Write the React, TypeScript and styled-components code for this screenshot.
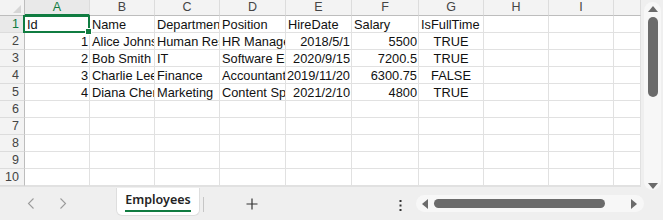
import React from 'react'
import styled, { createGlobalStyle, css } from 'styled-components'

const GlobalStyle = createGlobalStyle`
  html, body {
    margin: 0;
    padding: 0;
    background: #ffffff;
  }
  body {
    font-family: "Liberation Sans", Arial, sans-serif;
    overflow: hidden;
  }
`

const GREEN = '#107c41'
const GRID = '#e1e1e1'
const HEAD_LINE = '#bdbdbd'

const COL_WIDTHS = [65, 65, 65, 66, 66, 67, 65, 65, 65, 27]
const LETTERS = ['A', 'B', 'C', 'D', 'E', 'F', 'G', 'H', 'I', '']

type Align = 'left' | 'right' | 'center'
type CellValue = { text: string; align: Align }

const t = (text: string): CellValue => ({ text, align: 'left' })
const n = (text: string): CellValue => ({ text, align: 'right' })
const b = (text: string): CellValue => ({ text, align: 'center' })

const ROWS: CellValue[][] = [
  [t('Id'), t('Name'), t('Department'), t('Position'), t('HireDate'), t('Salary'), t('IsFullTime')],
  [n('1'), t('Alice Johnson'), t('Human Resources'), t('HR Manager'), n('2018/5/1'), n('5500'), b('TRUE')],
  [n('2'), t('Bob Smith'), t('IT'), t('Software Engineer'), n('2020/9/15'), n('7200.5'), b('TRUE')],
  [n('3'), t('Charlie Lee'), t('Finance'), t('Accountant'), n('2019/11/20'), n('6300.75'), b('FALSE')],
  [n('4'), t('Diana Chen'), t('Marketing'), t('Content Specialist'), n('2021/2/10'), n('4800'), b('TRUE')],
]

const Page = styled.div`
  width: 663px;
  height: 220px;
  display: flex;
  flex-direction: column;
  background: #efefef;
`

const Top = styled.div`
  display: flex;
  height: 187px;
`

const Sheet = styled.div<{ $cols: string }>`
  display: grid;
  grid-template-columns: ${p => p.$cols};
  grid-template-rows: 16px repeat(10, 17px);
  width: 641px;
  height: 187px;
  background: #ffffff;
  border-bottom: 1px solid ${GRID};
  box-sizing: border-box;
  overflow: hidden;
`

const Corner = styled.div`
  position: relative;
  background: #f3f3f3;
  border-right: 1px solid ${HEAD_LINE};
  border-bottom: 1px solid ${HEAD_LINE};
  &::after {
    content: '';
    position: absolute;
    right: 3px;
    bottom: 2px;
    width: 0;
    height: 0;
    border-left: 8px solid transparent;
    border-bottom: 8px solid #d6d6d6;
  }
`

const ColHead = styled.div<{ $active?: boolean }>`
  background: #f3f3f3;
  border-right: 1px solid #dcdcdc;
  border-bottom: 1px solid ${HEAD_LINE};
  font-size: 12.5px;
  line-height: 15px;
  text-align: center;
  color: #444444;
  ${p =>
    p.$active &&
    css`
      background: #e9e9e9;
      color: ${GREEN};
      border-bottom: 2px solid ${GREEN};
    `}
`

const RowHead = styled.div<{ $active?: boolean }>`
  background: #f3f3f3;
  border-right: 1px solid ${HEAD_LINE};
  border-bottom: 1px solid #dcdcdc;
  font-size: 12.5px;
  line-height: 17px;
  text-align: right;
  padding-right: 5px;
  color: #444444;
  ${p =>
    p.$active &&
    css`
      background: #e9e9e9;
      color: ${GREEN};
    `}
`

const Cell = styled.div<{ $align: Align }>`
  position: relative;
  border-right: 1px solid ${GRID};
  border-bottom: 1px solid ${GRID};
  padding: ${p => (p.$align === 'right' ? '0 1px 0 0' : '0 2px')};
  font-size: 12.8px;
  line-height: 17px;
  color: #111111;
  white-space: nowrap;
  overflow: hidden;
  text-align: ${p => p.$align};
  min-width: 0;
`

const SelectedCell = styled(Cell)`
  overflow: visible;
  z-index: 2;
  span {
    display: block;
    overflow: hidden;
  }
`

const Selection = styled.div`
  position: absolute;
  left: -2px;
  top: -1px;
  right: -1px;
  bottom: -1px;
  border: 2px solid ${GREEN};
  pointer-events: none;
  &::after {
    content: '';
    position: absolute;
    right: -4px;
    bottom: -4px;
    width: 5px;
    height: 5px;
    background: ${GREEN};
    border: 1px solid #ffffff;
  }
`

const VScroll = styled.div`
  width: 22px;
  padding: 2px 2px 0 3px;
  box-sizing: border-box;
  display: flex;
`

const VTrack = styled.div`
  flex: 1;
  height: 188px;
  border-radius: 9px;
  background: #f7f7f7;
  display: flex;
  flex-direction: column;
  align-items: center;
  padding-top: 3px;
  box-sizing: border-box;
`

const VThumb = styled.div`
  width: 10px;
  height: 80px;
  margin-top: 4px;
  border-radius: 5px;
  background: #6b6b6b;
`

const Spacer = styled.div`
  flex: 1;
`

const Bottom = styled.div`
  flex: 1;
  display: flex;
  align-items: flex-start;
`

const Nav = styled.div`
  width: 116px;
  height: 33px;
  display: flex;
  align-items: center;
  padding-left: 27px;
  gap: 24px;
  box-sizing: border-box;
`

const Tab = styled.div`
  width: 84px;
  height: 28px;
  margin-top: 1px;
  background: #ffffff;
  border: 1px solid #dedede;
  border-top: none;
  border-radius: 0 0 6px 6px;
  box-sizing: border-box;
  display: flex;
  flex-direction: column;
  align-items: center;
  padding-top: 3px;
`

const TabLabel = styled.div`
  font-family: "Noto Sans", "Open Sans", sans-serif;
  font-weight: 600;
  font-size: 12.5px;
  line-height: 17px;
  color: #242424;
  padding-bottom: 2px;
  border-bottom: 2px solid ${GREEN};
`

const Divider = styled.div`
  width: 1px;
  height: 15px;
  margin: 10px 0 0 3px;
  background: #c6c6c6;
`

const AddButton = styled.div`
  margin: 11px 0 0 42px;
  width: 12px;
  height: 12px;
  display: flex;
`

const More = styled.div`
  margin: 13px 0 0 141px;
  width: 3px;
  height: 11px;
  display: flex;
`

const HTrack = styled.div`
  margin: 8px 0 0 14px;
  width: 228px;
  height: 17px;
  border-radius: 9px;
  background: #f7f7f7;
  display: flex;
  align-items: center;
  padding: 0 6px 0 5px;
  box-sizing: border-box;
`

const HThumb = styled.div`
  width: 171px;
  height: 9px;
  margin-left: 5px;
  border-radius: 5px;
  background: #6b6b6b;
`

const Chevron = ({ dir }: { dir: 'left' | 'right' }) => (
  <svg width="8" height="11" viewBox="0 0 8 11">
    <path
      d={dir === 'left' ? 'M6.5 0.5 L1.5 5.5 L6.5 10.5' : 'M1.5 0.5 L6.5 5.5 L1.5 10.5'}
      fill="none"
      stroke="#9b9b9b"
      strokeWidth="1.1"
    />
  </svg>
)

const Arrow = ({ dir }: { dir: 'up' | 'down' | 'left' | 'right' }) => {
  const pts = {
    up: '0,7 5,1 10,7',
    down: '0,1 5,7 10,1',
    left: '7,0 1,5 7,10',
    right: '1,0 7,5 1,10',
  }[dir]
  const vertical = dir === 'up' || dir === 'down'
  return (
    <svg width={vertical ? 10 : 8} height={vertical ? 8 : 10} viewBox={vertical ? '0 0 10 8' : '0 0 8 10'}>
      <polygon points={pts} fill="#6b6b6b" />
    </svg>
  )
}

export default function App() {
  const cols = `25px ${COL_WIDTHS.map(w => `${w}px`).join(' ')}`
  const rows = Array.from({ length: 10 }, (_, i) => i)

  return (
    <Page>
      <GlobalStyle />
      <Top>
        <Sheet $cols={cols}>
          <Corner />
          {LETTERS.map((l, i) => (
            <ColHead key={i} $active={i === 0}>
              {l}
            </ColHead>
          ))}
          {rows.map(r => (
            <React.Fragment key={r}>
              <RowHead $active={r === 0}>{r + 1}</RowHead>
              {COL_WIDTHS.map((_, c) => {
                const v = ROWS[r]?.[c]
                if (r === 0 && c === 0 && v) {
                  return (
                    <SelectedCell key={c} $align={v.align}>
                      <span>{v.text}</span>
                      <Selection />
                    </SelectedCell>
                  )
                }
                return (
                  <Cell key={c} $align={v ? v.align : 'left'}>
                    {v ? v.text : ''}
                  </Cell>
                )
              })}
            </React.Fragment>
          ))}
        </Sheet>
        <VScroll>
          <VTrack>
            <Arrow dir="up" />
            <VThumb />
            <Spacer />
            <Arrow dir="down" />
          </VTrack>
        </VScroll>
      </Top>
      <Bottom>
        <Nav>
          <Chevron dir="left" />
          <Chevron dir="right" />
        </Nav>
        <Tab>
          <TabLabel>Employees</TabLabel>
        </Tab>
        <Divider />
        <AddButton>
          <svg width="12" height="12" viewBox="0 0 12 12">
            <path d="M6 0.5 V11.5 M0.5 6 H11.5" stroke="#333333" strokeWidth="1.2" />
          </svg>
        </AddButton>
        <More>
          <svg width="3" height="11" viewBox="0 0 3 11">
            <rect x="0.5" y="0" width="2" height="2" fill="#333333" />
            <rect x="0.5" y="4.5" width="2" height="2" fill="#333333" />
            <rect x="0.5" y="9" width="2" height="2" fill="#333333" />
          </svg>
        </More>
        <HTrack>
          <Arrow dir="left" />
          <HThumb />
          <Spacer />
          <Arrow dir="right" />
        </HTrack>
      </Bottom>
    </Page>
  )
}
